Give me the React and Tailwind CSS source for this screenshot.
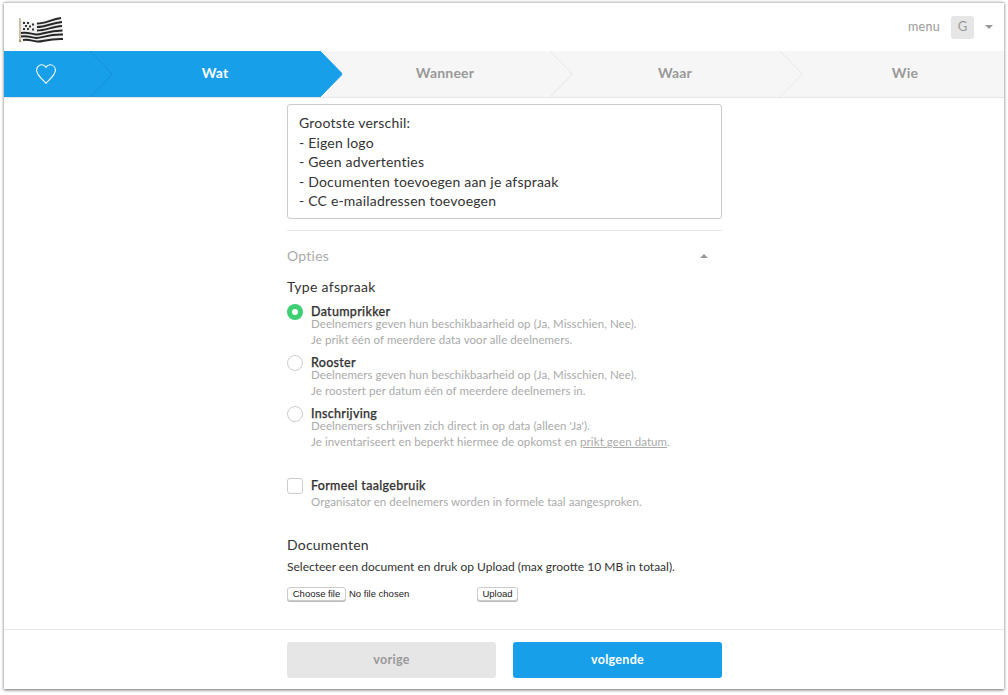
import React from "react";

const font = { fontFamily: "Lato, 'Open Sans', sans-serif" };

function Flag() {
  return (
    <svg width="46" height="27" viewBox="0 0 46 27" className="block">
      <path d="M2 2v23" stroke="#a8986c" strokeWidth="1.2" />
      <circle cx="2" cy="25" r="1.2" fill="#a8986c" />
      <path d="M3 5c6-2 10 2 15 2s14-5 25-6l1 6 1 17c-7-1-11 0-16 2s-11 1-15-1-7-2-11-1z" fill="#eee" />
      <g fill="none" stroke="#1c1c1c" strokeWidth="1.9" opacity="0.95">
        <path d="M19 7.5c9 0 14-4 24-5.5" />
        <path d="M19 11c9 0 14-4 25-5" />
        <path d="M19 14.5c9 0 15-4 25-4.5" />
        <path d="M3 17c7-1 10 1 15 1.5s12-4 26.500-4" />
        <path d="M3 20.500c7-1 10 1 15 1.500s12-4 27-3.500" />
        <path d="M5 24c6-1 9 1 14 1.500s11-3 26-2.500" />
      </g>
      <g fill="#333">
        <rect x="5" y="6" width="2" height="2" /><rect x="9" y="6" width="2" height="2" /><rect x="14" y="7.500" width="2" height="2" />
        <rect x="7" y="9" width="2" height="2" /><rect x="11" y="9.500" width="2" height="2" />
        <rect x="5" y="12" width="2" height="2" /><rect x="9" y="12" width="2" height="2" /><rect x="14" y="12.500" width="2" height="2" />
      </g>
    </svg>
  );
}

function Chevron({ active, edge }) {
  return (
    <svg width="23" height="46" viewBox="0 0 23 46" className="absolute top-0 left-full z-10 block">
      <path d="M0 0L21.500 22Q22 23 21.500 24L0 46" fill={active ? "#189fe9" : "#f6f6f6"} stroke={edge} strokeWidth="1" />
    </svg>
  );
}

function Step({ label, active }) {
  return (
    <div className={`relative shrink-0 w-[230px] h-full flex items-center justify-center pl-[20px] pb-[4px] text-[14px] font-bold tracking-[0.2px] ${active ? "bg-[#189fe9] text-white" : "text-[#999]"}`}>
      {label}
      <Chevron active={active} edge={active ? "#189fe9" : "#e6e6e6"} />
    </div>
  );
}

function Option({ title, lines, children }) {
  return (
    <div className="flex gap-[8px]">
      <div className="w-[16px] shrink-0 pt-[1px]">{children}</div>
      <div className="pt-[2px]">
        <div className="text-[12.5px] leading-[14px] font-medium text-[#333] tracking-[0.3px] [-webkit-text-stroke:0.25px_#333]">{title}</div>
        <div className="text-[11.5px] leading-[16px] mt-[-3px] text-[#aaa] tracking-[0.08px]">{lines}</div>
      </div>
    </div>
  );
}

const Radio = () => <div className="w-[16px] h-[16px] rounded-full border border-[#ccc] bg-white" />;

export default function App() {
  return (
    <div className="h-[695px] bg-white pt-[2px] pl-[4px]" style={font}>
      <div className="w-[1000px] h-[687px] flex flex-col bg-white border-t border-[#ccc] shadow-[0_1px_3px_rgba(0,0,0,0.6)] overflow-hidden">
        <div className="h-[48px] shrink-0 flex items-center justify-between pl-[14px] pr-[11px]">
          <div className="mt-[4px] blur-[0.4px]"><Flag /></div>
          <div className="flex items-center">
            <span className="text-[12.5px] text-[#999] tracking-[0.3px]">menu</span>
            <span className="ml-[11px] w-[23px] h-[23px] rounded-[3px] bg-[#e6e6e6] text-[#999] text-[13px] flex items-center justify-center">G</span>
            <span className="ml-[11px] w-0 h-0 border-x-[4px] border-x-transparent border-t-[4px] border-t-[#999]" />
          </div>
        </div>

        <div className="h-[47px] shrink-0 flex bg-[#f6f6f6] border-b border-[#e6e6e6] overflow-hidden">
          <div className="relative shrink-0 w-[86px] bg-[#189fe9] flex items-center pl-[32px]">
            <svg width="20" height="20" viewBox="0 0 20 20" fill="none" stroke="#fff" strokeWidth="1.1" className="block">
              <path d="M10 19.300C8.500 16.800 .6 11.800 .6 6.300 .6 3 3 .8 5.800 .8 7.600 .8 9.200 1.900 10 3.300 10.800 1.900 12.400 .8 14.200 .8 17 .8 19.400 3 19.400 6.300 19.400 11.800 11.500 16.800 10 19.300Z" />
            </svg>
            <Chevron active edge="#1590d6" />
          </div>
          <Step label="Wat" active />
          <Step label="Wanneer" />
          <Step label="Waar" />
          <Step label="Wie" />
        </div>

        <div className="flex-1 w-[435px] ml-[283px] pt-[6px]">
          <div className="h-[115px] border border-[#ccc] rounded-[3px] px-[11px] pt-[8px] text-[14px] leading-[19.5px] text-[#333] tracking-[0.2px]">
            <div>Grootste verschil:</div>
            <div>- Eigen logo</div>
            <div>- Geen advertenties</div>
            <div>- Documenten toevoegen aan je afspraak</div>
            <div>- CC e-mailadressen toevoegen</div>
          </div>
          <div className="mt-[11px] border-t border-[#e8e8e8] flex items-center justify-between pt-[16px] pr-[14px]">
            <span className="text-[14px] leading-[18px] text-[#aaa] tracking-[0.25px]">Opties</span>
            <span className="w-0 h-0 border-x-[4px] border-x-transparent border-b-[4px] border-b-[#999]" />
          </div>
          <div className="mt-[13px] text-[14px] leading-[18px] text-[#333] tracking-[0.3px]">Type afspraak</div>

          <div className="mt-[7px] flex flex-col gap-[6px]">
            <Option title="Datumprikker" lines={<>Deelnemers geven hun beschikbaarheid op (Ja, Misschien, Nee).<br />Je prikt één of meerdere data voor alle deelnemers.</>}>
              <div className="w-[16px] h-[16px] rounded-full bg-[#3ecf73] flex items-center justify-center">
                <div className="w-[6px] h-[6px] rounded-full bg-white" />
              </div>
            </Option>
            <Option title="Rooster" lines={<>Deelnemers geven hun beschikbaarheid op (Ja, Misschien, Nee).<br />Je roostert per datum één of meerdere deelnemers in.</>}>
              <Radio />
            </Option>
            <Option title="Inschrijving" lines={<>Deelnemers schrijven zich direct in op data (alleen 'Ja').<br />Je inventariseert en beperkt hiermee de opkomst en <span className="underline">prikt geen datum</span>.</>}>
              <Radio />
            </Option>
          </div>

          <div className="mt-[28px] flex gap-[8px]">
            <div className="w-[16px] h-[16px] shrink-0 rounded-[3px] border border-[#ccc]" />
            <div className="pt-[1px]">
              <div className="text-[12.5px] leading-[14px] font-medium text-[#333] tracking-[0.3px] [-webkit-text-stroke:0.25px_#333]">Formeel taalgebruik</div>
              <div className="text-[11.5px] leading-[16px] mt-[1px] text-[#aaa] tracking-[0.05px]">Organisator en deelnemers worden in formele taal aangesproken.</div>
            </div>
          </div>

          <div className="mt-[26px] text-[14px] leading-[18px] text-[#333] tracking-[0.2px]">Documenten</div>
          <div className="mt-[5px] text-[12px] leading-[16px] text-[#333]">Selecteer een document en druk op Upload (max grootte 10 MB in totaal).</div>
          <div className="mt-[12px] flex items-center text-[9.5px] text-[#222]" style={{ fontFamily: "'Liberation Sans', sans-serif" }}>
            <button className="w-[59px] h-[14px] bg-white border border-[#ccc] rounded-[3px] shadow-[0_1px_0_#bbb] leading-none">Choose file</button>
            <span className="ml-[3px] w-[128px]">No file chosen</span>
            <button className="w-[41px] h-[14px] bg-white border border-[#ccc] rounded-[3px] shadow-[0_1px_0_#bbb] leading-none">Upload</button>
          </div>
        </div>

        <div className="h-[60px] shrink-0 border-t border-[#e8e8e8] flex gap-[17px] pt-[12px] pl-[283px]">
          <div className="w-[209px] h-[36px] pt-[1px] bg-[#e6e6e6] rounded-[3px] flex items-center justify-center text-[12.5px] font-bold text-[#999] tracking-[0.3px]">vorige</div>
          <div className="w-[209px] h-[36px] pt-[1px] bg-[#189fe9] rounded-[3px] flex items-center justify-center text-[12.5px] font-bold text-white tracking-[0.3px]">volgende</div>
        </div>
      </div>
    </div>
  );
}
